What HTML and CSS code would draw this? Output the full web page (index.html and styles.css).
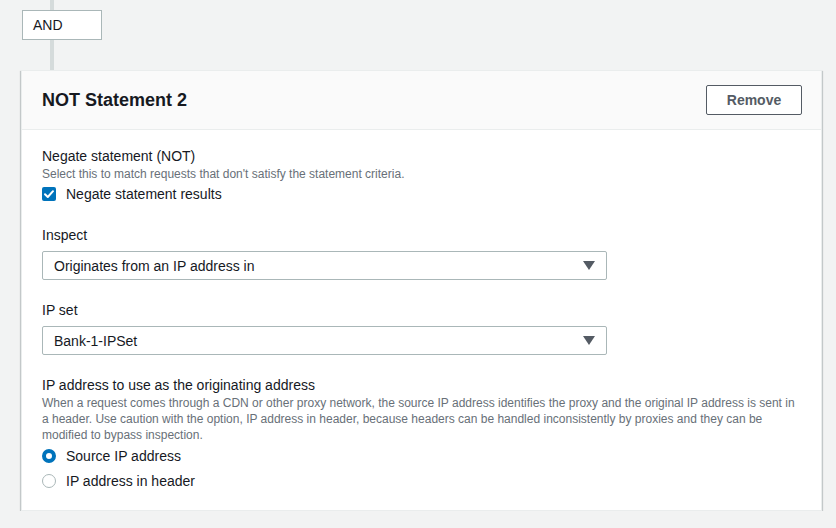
FILE: index.html
```html
<!DOCTYPE html>
<html>
<head>
<meta charset="utf-8">
<link rel="stylesheet" href="styles.css">
</head>
<body>
<div class="page">
  <div class="connector">
    <div class="line line-top"></div>
    <div class="and-box">AND</div>
    <div class="line line-bottom"></div>
  </div>
  <div class="card">
    <div class="card-header">
      <h2 class="card-title">NOT Statement 2</h2>
      <button class="btn">Remove</button>
    </div>
    <div class="card-body">
      <div class="field">
        <div class="label">Negate statement (NOT)</div>
        <div class="desc">Select this to match requests that don't satisfy the statement criteria.</div>
        <label class="option option-first">
          <span class="checkbox"><svg width="14" height="14" viewBox="0 0 14 14"><path d="M3 7.2 L5.8 10 L11 4.2" fill="none" stroke="#fff" stroke-width="2" stroke-linecap="round" stroke-linejoin="round"/></svg></span>
          <span>Negate statement results</span>
        </label>
      </div>
      <div class="field">
        <div class="label">Inspect</div>
        <div class="select"><span>Originates from an IP address in</span><span class="caret"></span></div>
      </div>
      <div class="field">
        <div class="label">IP set</div>
        <div class="select"><span>Bank-1-IPSet</span><span class="caret"></span></div>
      </div>
      <div class="field">
        <div class="label">IP address to use as the originating address</div>
        <div class="desc">When a request comes through a CDN or other proxy network, the source IP address identifies the proxy and the original IP address is sent in a header. Use caution with the option, IP address in header, because headers can be handled inconsistently by proxies and they can be modified to bypass inspection.</div>
        <label class="option">
          <span class="radio radio-on"></span>
          <span>Source IP address</span>
        </label>
        <label class="option">
          <span class="radio"></span>
          <span>IP address in header</span>
        </label>
      </div>
    </div>
  </div>
</div>
</body>
</html>
```

FILE: styles.css
```css
html, body {
  margin: 0;
  padding: 0;
  background: #f2f3f3;
}
body {
  font-family: "Liberation Sans", Arial, sans-serif;
  color: #16191f;
  font-size: 14px;
}
.page {
  padding: 0 14px 0 21px;
}
.connector {
  display: flex;
  flex-direction: column;
}
.line {
  width: 4px;
  background: #d5dbdb;
  margin-left: 29px;
}
.line-top { height: 10px; }
.line-bottom { height: 30px; }
.and-box {
  box-sizing: border-box;
  width: 80px;
  height: 30px;
  margin-left: 1px;
  background: #fff;
  border: 1px solid #aab7b8;
  padding: 0 10px;
  line-height: 28px;
  font-size: 14px;
}
.card {
  background: #fff;
  border: 1px solid #eaeded;
  box-shadow: 0 1px 1px 0 rgba(0,28,36,0.3), 1px 1px 1px 0 rgba(0,28,36,0.15), -1px 1px 1px 0 rgba(0,28,36,0.15);
}
.card-header {
  display: flex;
  align-items: center;
  justify-content: space-between;
  height: 58px;
  padding: 0 19px 0 20px;
  background: #fafafa;
  border-bottom: 1px solid #eaeded;
}
.card-title {
  margin: 0;
  font-size: 18px;
  font-weight: 700;
}
.btn {
  box-sizing: border-box;
  width: 96px;
  height: 30px;
  background: #fff;
  border: 1px solid #545b64;
  border-radius: 2px;
  color: #545b64;
  font-family: inherit;
  font-size: 14px;
  font-weight: 700;
  padding: 0;
}
.card-body {
  padding: 16px 20px 17px;
  display: flex;
  flex-direction: column;
  gap: 20px;
}
.field {
  display: flex;
  flex-direction: column;
}
.label {
  line-height: 20px;
}
.desc {
  font-size: 12px;
  line-height: 16px;
  color: #687078;
}
.option {
  display: flex;
  align-items: center;
  gap: 10px;
  height: 25px;
}
.option-first {
  height: 23px;
}
.checkbox {
  width: 14px;
  height: 14px;
  border-radius: 2px;
  background: #0073bb;
  display: flex;
}
.radio {
  box-sizing: border-box;
  width: 14px;
  height: 14px;
  border-radius: 50%;
  border: 1px solid #aab7b8;
  background: #fff;
}
.radio-on {
  border: 4px solid #0073bb;
}
.select {
  box-sizing: border-box;
  width: 565px;
  height: 29px;
  margin-top: 6px;
  border: 1px solid #aab7b8;
  border-radius: 2px;
  display: flex;
  align-items: center;
  justify-content: space-between;
  padding: 0 11px 0 11px;
}
.caret {
  width: 0;
  height: 0;
  border-left: 6px solid transparent;
  border-right: 6px solid transparent;
  border-top: 9px solid #545b64;
}
```
